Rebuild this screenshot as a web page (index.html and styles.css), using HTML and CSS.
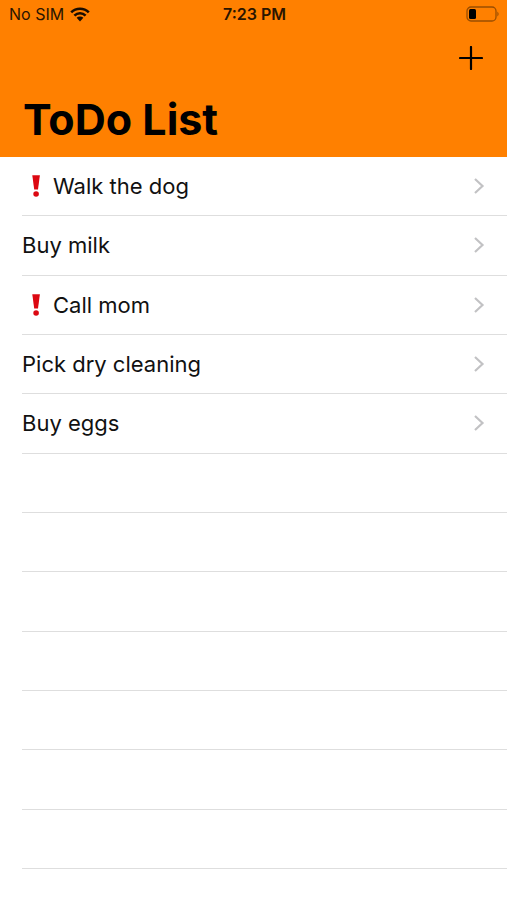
FILE: index.html
```
<!DOCTYPE html>
<html lang="en">
<head>
<meta charset="utf-8">
<meta name="viewport" content="width=device-width, initial-scale=1">
<title>ToDo List</title>
<link rel="stylesheet" href="styles.css">
</head>
<body>
<header class="header">
  <div class="status">
    <div class="carrier">
      <span>No SIM</span>
      <svg class="wifi" viewBox="0 0 20 15" aria-hidden="true">
        <path d="M1.2 5.4A12.6 12.6 0 0 1 18.8 5.4M4.4 8.6A8 8 0 0 1 15.6 8.6" fill="none" stroke="currentColor" stroke-width="2.6"/>
        <path d="M6.6 10.8A4.9 4.9 0 0 1 13.4 10.8L10 14.4Z" fill="currentColor"/>
      </svg>
    </div>
    <span class="time">7:23 PM</span>
    <svg class="battery" viewBox="0 0 34 16" aria-hidden="true">
      <rect x="1" y="1" width="29" height="14" rx="4" fill="none" stroke="currentColor" stroke-opacity=".4" stroke-width="1.3"/>
      <rect x="3" y="3" width="7" height="10" rx="1.5" fill="currentColor"/>
      <path d="M31.5 5.5Q33.5 8 31.5 10.5Z" fill="currentColor" fill-opacity=".5"/>
    </svg>
  </div>
  <div class="toolbar">
    <button class="add" type="button" aria-label="Add item">
      <svg viewBox="0 0 24 24" aria-hidden="true"><path d="M12 1V23M1 12H23" stroke="currentColor" stroke-width="2.2" stroke-linecap="round"/></svg>
    </button>
  </div>
  <h1 class="title">ToDo List</h1>
</header>
<main class="main">
  <ul class="list">
    <li class="row"><a class="item" href="#walk"><svg class="mark" viewBox="0 0 31 24" role="img" aria-label="Important"><path d="M10.3 1.2H17.9L16 15.6H12.2Z"/><circle cx="14.1" cy="20" r="2.8"/></svg><span class="label">Walk the dog</span><svg class="chevron" viewBox="0 0 12 18" aria-hidden="true"><path d="M2 2L9.5 9L2 16"/></svg></a></li>
    <li class="row"><a class="item" href="#milk"><span class="label">Buy milk</span><svg class="chevron" viewBox="0 0 12 18" aria-hidden="true"><path d="M2 2L9.5 9L2 16"/></svg></a></li>
    <li class="row"><a class="item" href="#mom"><svg class="mark" viewBox="0 0 31 24" role="img" aria-label="Important"><path d="M10.3 1.2H17.9L16 15.6H12.2Z"/><circle cx="14.1" cy="20" r="2.8"/></svg><span class="label">Call mom</span><svg class="chevron" viewBox="0 0 12 18" aria-hidden="true"><path d="M2 2L9.5 9L2 16"/></svg></a></li>
    <li class="row"><a class="item" href="#cleaning"><span class="label">Pick dry cleaning</span><svg class="chevron" viewBox="0 0 12 18" aria-hidden="true"><path d="M2 2L9.5 9L2 16"/></svg></a></li>
    <li class="row"><a class="item" href="#eggs"><span class="label">Buy eggs</span><svg class="chevron" viewBox="0 0 12 18" aria-hidden="true"><path d="M2 2L9.5 9L2 16"/></svg></a></li>
    <li class="row"></li>
    <li class="row"></li>
    <li class="row"></li>
    <li class="row"></li>
    <li class="row"></li>
    <li class="row"></li>
    <li class="row"></li>
  </ul>
</main>
</body>
</html>
```
FILE: styles.css
```
* {
  box-sizing: border-box;
}

body {
  display: flex;
  flex-direction: column;
  min-height: 100vh;
  margin: 0;
  background: #fff;
  color: #111;
  font-family: Inter, "Liberation Sans", sans-serif;
}

.header {
  padding-bottom: 7px;
  background: #ff8000;
  color: #000;
}

.status {
  display: grid;
  grid-template-columns: 1fr auto 1fr;
  align-items: center;
  height: 28px;
  padding: 0 7px 0 9px;
  color: #2a1500;
  font-size: 16px;
  line-height: 20px;
}

.carrier {
  display: flex;
  align-items: center;
  gap: 6px;
}

.wifi {
  width: 20px;
  height: 15px;
  color: #1a0d00;
}

.time {
  font-weight: 600;
}

.battery {
  justify-self: end;
  width: 34px;
  height: 16px;
  color: #000;
}

.toolbar {
  display: flex;
  justify-content: flex-end;
  height: 60px;
  padding: 0 24px;
}

.add {
  display: flex;
  align-items: center;
  height: 60px;
  padding: 0;
  border: 0;
  background: none;
  color: #000;
}

.add svg {
  width: 24px;
  height: 24px;
}

.title {
  margin: 0;
  padding: 0 23px;
  font-size: 43px;
  font-weight: 700;
  line-height: 62px;
}

.main {
  display: flex;
  flex: 1;
  padding-bottom: 31px;
}

.list {
  display: grid;
  flex: 1;
  grid-auto-rows: minmax(44px, 1fr);
  margin: 0;
  padding: 0 0 0 22px;
  list-style: none;
}

.row {
  display: flex;
  border-bottom: 1px solid #dedede;
}

.item {
  display: flex;
  flex: 1;
  align-items: center;
  padding-right: 22px;
  color: inherit;
  font-size: 22px;
  line-height: 28px;
  text-decoration: none;
}

.label {
  flex: 1;
}

.mark {
  width: 31px;
  height: 24px;
  fill: #dc0812;
}

.chevron {
  width: 12px;
  height: 18px;
  fill: none;
  stroke: #c2c2c4;
  stroke-width: 2.2;
}
```
